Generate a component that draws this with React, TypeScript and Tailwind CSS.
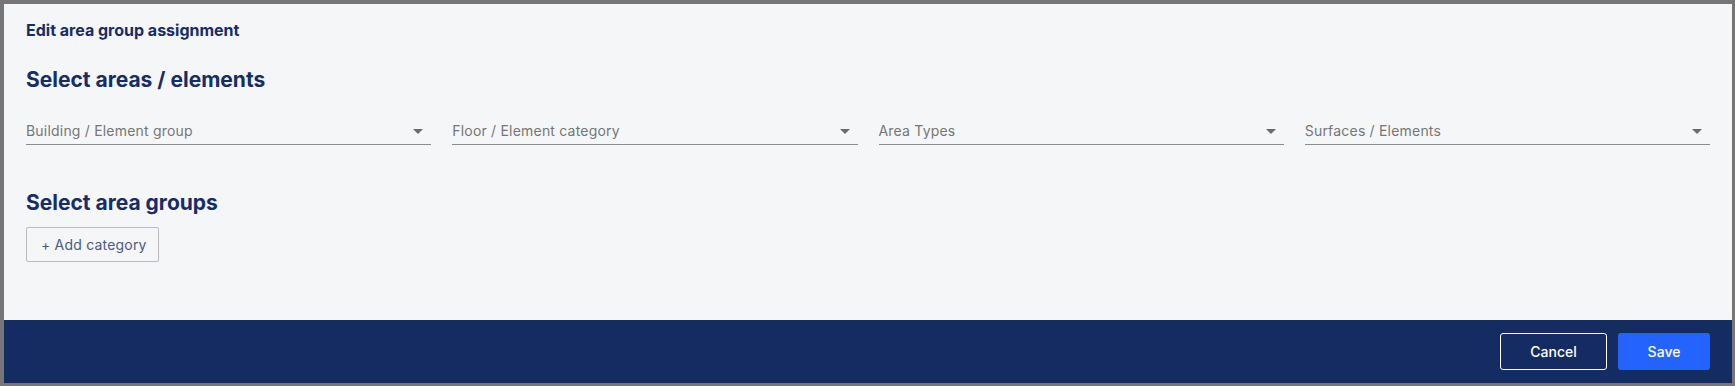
const filters = ['Building / Element group', 'Floor / Element category', 'Area Types', 'Surfaces / Elements']

function FilterSelect({ label }: { label: string }) {
  return (
    <div className="flex items-center justify-between border-b border-[#8c8c8c] pb-[3px] pr-[8px]">
      <span className="text-[14px] leading-5 tracking-[0.2px] text-[#767676]">{label}</span>
      {/* small caret */}
      <svg width="10" height="5" viewBox="0 0 10 5" className="text-[#6b6b6b]">
        <path d="M0 0h10L5 5z" fill="currentColor" />
      </svg>
    </div>
  )
}

export default function App() {
  return (
    <div className="h-[386px] bg-[#767676] pt-[4px] pl-[4px] pr-[3px] pb-[3px] font-['Inter','Liberation_Sans',sans-serif]">
      <div className="flex h-full flex-col bg-[#f5f6f8]">
        {/* Body */}
        <div className="flex-1 px-[22px] pt-[16px]">
          <h1 className="text-[16px] leading-5 font-bold text-[#172d66]">Edit area group assignment</h1>

          <h2 className="mt-[26px] text-[21px] leading-7 font-bold text-[#172d66]">Select areas / elements</h2>

          <div className="mt-[27px] grid grid-cols-4 gap-x-[21px]">
            {filters.map((f) => (
              <FilterSelect key={f} label={f} />
            ))}
          </div>

          <h2 className="mt-[44px] text-[21px] leading-7 font-bold text-[#172d66]">Select area groups</h2>

          <button className="mt-[10px] flex h-[35px] w-[133px] items-center rounded-[2px] border border-[#b9bbc0] pl-[14px] text-[14px] tracking-[0.2px] text-[#4c5a80]">
            + Add category
          </button>
        </div>

        {/* Footer */}
        <div className="flex h-[63px] items-center justify-end gap-[11px] bg-[#152c63] px-[22px]">
          <button className="h-[37px] w-[107px] rounded-[3px] border border-white text-[14px] font-medium text-white">
            Cancel
          </button>
          <button className="h-[37px] w-[92px] rounded-[3px] bg-[#2563ff] text-[14px] font-medium text-white">
            Save
          </button>
        </div>
      </div>
    </div>
  )
}
